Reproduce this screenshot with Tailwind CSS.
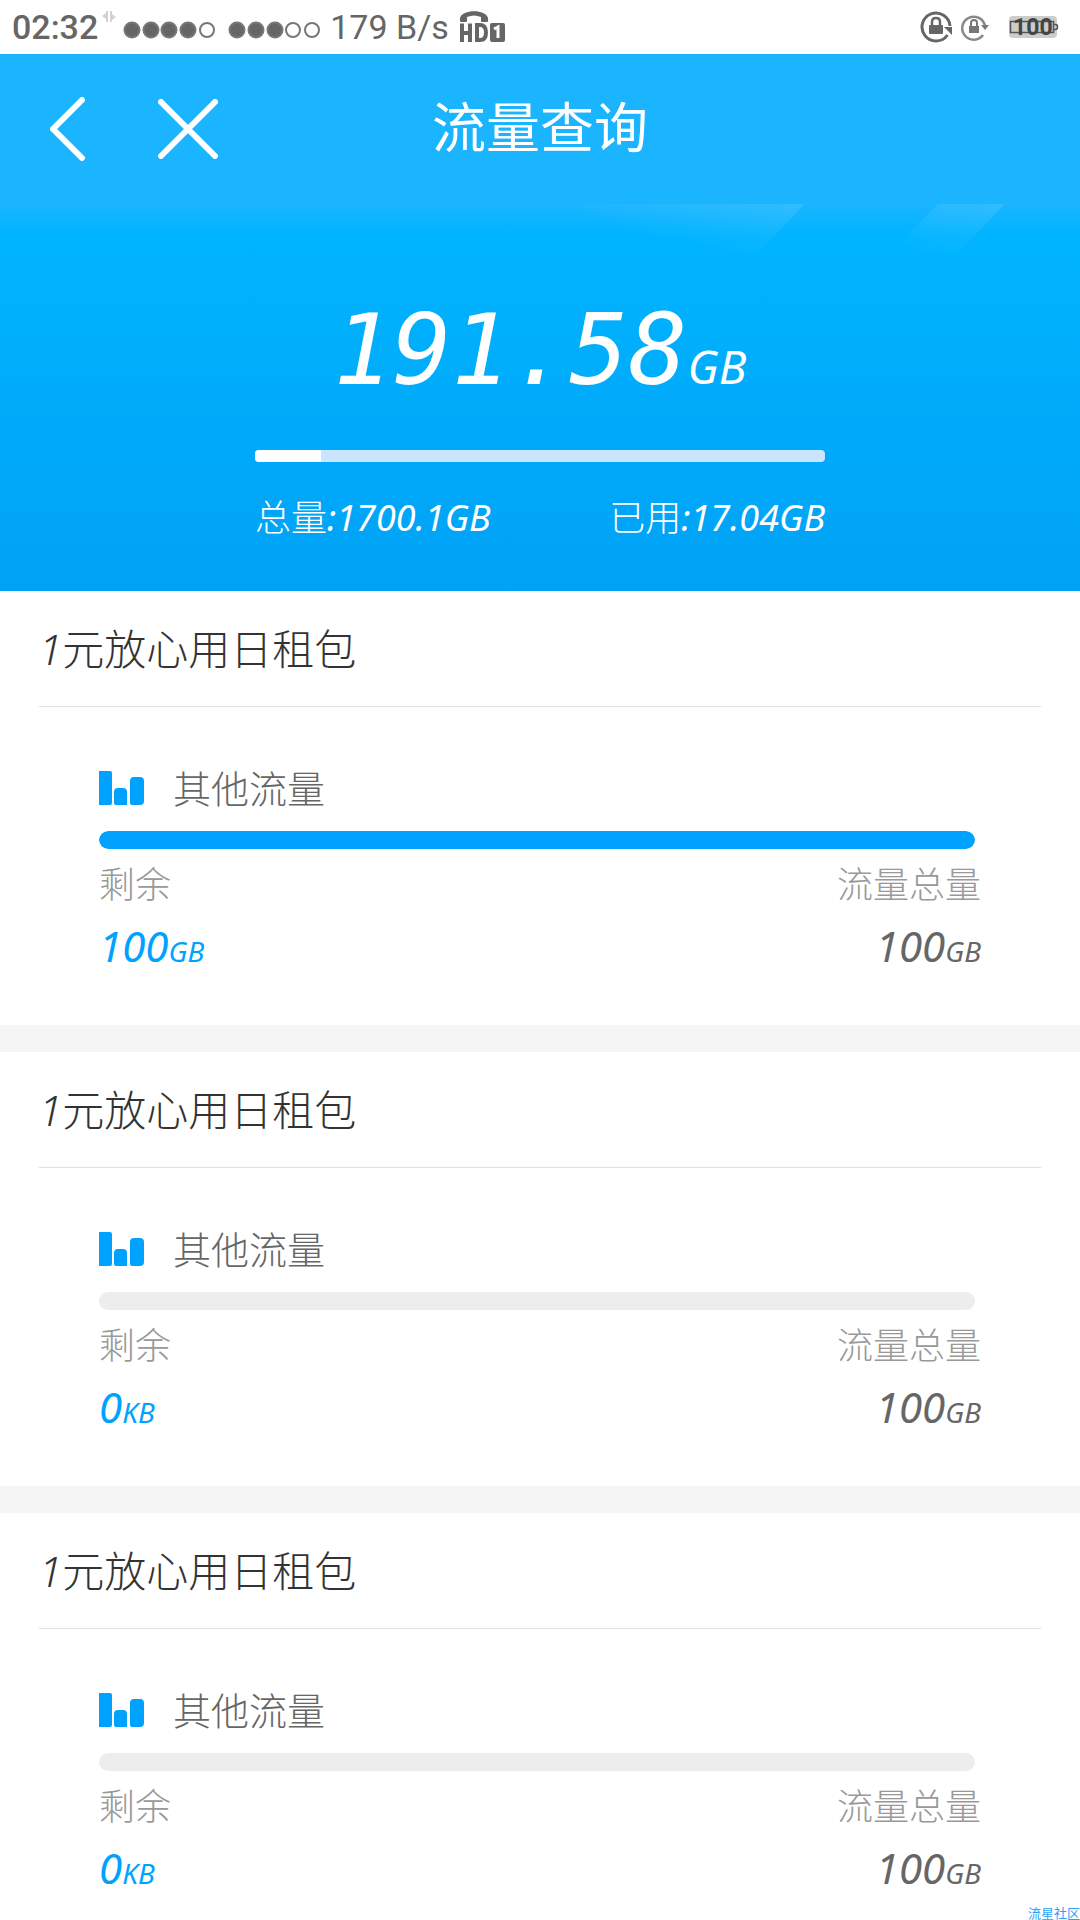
<!DOCTYPE html>
<html lang="zh-CN">
<head>
<meta charset="utf-8">
<meta name="viewport" content="width=device-width, initial-scale=1">
<title>流量查询</title>
<script src="https://cdn.jsdelivr.net/npm/@tailwindcss/browser@4"></script>
</head>
<body class="relative flex min-h-screen flex-col bg-white font-['Noto_Sans','Noto_Sans_CJK_SC',sans-serif] font-light text-[#666]">

<!-- Status bar -->
<div class="flex h-[54px] items-center justify-between pl-3 pr-[21px] font-['Roboto',sans-serif] text-[34px] leading-none text-[#666]">
  <div class="flex items-center">
    <span class="font-medium">02:32</span>
    <svg class="mb-5 ml-1 h-3 w-[14px]" viewBox="0 0 14 12" fill="#d2d2d2" aria-hidden="true"><path d="M6 0v11H4V8L0 5l4-3V0zM8 0h2v3l4 3-4 3v2H8z"/></svg>
    <svg class="ml-1.5 mt-1.5 h-5 w-[200px]" viewBox="0 0 200 20" fill="#666" stroke="#777" stroke-width="2" aria-hidden="true">
      <circle cx="10" cy="10" r="7.5"/><circle cx="29" cy="10" r="7.5"/><circle cx="47" cy="10" r="7.5"/><circle cx="66" cy="10" r="7.5"/><circle cx="85" cy="10" r="7" fill="none"/>
      <circle cx="115" cy="10" r="7.5"/><circle cx="134" cy="10" r="7.5"/><circle cx="153" cy="10" r="7.5"/><circle cx="171" cy="10" r="7" fill="none"/><circle cx="190" cy="10" r="7" fill="none"/>
    </svg>
    <span class="ml-2 font-normal">179 B/s</span>
    <svg class="ml-[10px] h-8 w-12" viewBox="0 0 48 32" aria-label="HD 1">
      <path d="M1 10V7C3-2 27-2 29 7v3q0 1-1 1h-5q-1 0-1-1V6Q15 3 8 6v4q0 1-1 1H2q-1 0-1-1z" fill="#666"/>
      <path d="M3 12.500V31M11 12.500V31M3 22H11M18 14v15h3q6 0 6-7.500T21 14z" fill="none" stroke="#666" stroke-width="4"/>
      <rect x="31" y="12" width="15" height="19" rx="2" fill="#666"/>
      <path d="M35 18l4-2v11" fill="none" stroke="#fff" stroke-width="3"/>
    </svg>
  </div>
  <div class="flex items-center">
    <svg class="h-8 w-8" viewBox="0 0 32 32" aria-hidden="true">
      <path d="M27.500 24A14 14 0 1 1 30 15" fill="none" stroke="#666" stroke-width="3"/>
      <path d="M24 16h8v8z" fill="#666"/><rect x="9" y="14" width="14" height="9" rx="1" fill="#666"/>
      <path d="M12 15v-4q0-4 4-4t4 4v4" fill="none" stroke="#666" stroke-width="2.500"/>
    </svg>
    <svg class="ml-[9px] h-7 w-7" viewBox="0 0 28 28" aria-hidden="true">
      <path d="M22 22A11.500 11.500 0 1 1 24 13" fill="none" stroke="#888" stroke-width="2.500"/>
      <path d="M20 12h8l-4 5z" fill="#777"/><rect x="8" y="13" width="10" height="7" fill="#777"/>
      <path d="M10 13v-3q0-3 3-3t3 3v3" fill="none" stroke="#777" stroke-width="2"/>
    </svg>
    <svg class="ml-5 h-9 w-[50px]" viewBox="0 -6 50 36" aria-label="100">
      <rect x="0" y="1" width="48" height="22" rx="4" fill="#ccc"/>
      <path d="M1.500 6.500h43v11h-43zM44.500 9.500h2q2 0 2 2.500t-2 2.500h-2" fill="none" stroke="#555" stroke-width="1.500"/>
      <text x="4" y="20" font-size="23" font-weight="700" fill="#444">100</text>
    </svg>
  </div>
</div>

<!-- Navigation and total usage -->
<div class="bg-[linear-gradient(#1ab4ff_0px,#1ab4ff_150px,#00b4ff_182px,#00a2f6_100%)] text-white">
  <header class="grid h-[150px] grid-cols-[1fr_auto_1fr] items-center px-[50px]">
    <div class="flex items-center gap-[72px]">
      <button type="button" aria-label="返回"><svg class="h-16 w-9" viewBox="0 0 36 64" fill="none" stroke="#fff" stroke-width="6" stroke-linecap="round" stroke-linejoin="round"><path d="M32 3L3 32l29 29"/></svg></button>
      <button type="button" aria-label="关闭"><svg class="h-[60px] w-[60px]" viewBox="0 0 60 60" fill="none" stroke="#fff" stroke-width="6" stroke-linecap="round"><path d="M3 3l54 54M57 3L3 57"/></svg></button>
    </div>
    <h1 class="pb-1 text-[54px] font-normal leading-[60px]">流量查询</h1>
  </header>
  <section class="relative h-[387px] px-[255px]">
    <svg class="absolute right-0 top-0 h-16 w-[540px]" viewBox="0 0 540 64" aria-hidden="true">
      <defs>
        <linearGradient id="beamWide" gradientUnits="userSpaceOnUse" x1="240" y1="0" x2="226" y2="60"><stop stop-color="#fff" stop-opacity=".1"/><stop offset="1" stop-color="#fff" stop-opacity="0"/></linearGradient>
        <linearGradient id="beamSmall" gradientUnits="userSpaceOnUse" x1="440" y1="0" x2="428" y2="60"><stop stop-color="#fff" stop-opacity=".1"/><stop offset="1" stop-color="#fff" stop-opacity="0"/></linearGradient>
      </defs>
      <path d="M30 0H265L203 64H190z" fill="url(#beamWide)"/>
      <path d="M398 0h67l-62 64h-67z" fill="url(#beamSmall)"/>
    </svg>
    <p class="flex items-baseline justify-center whitespace-nowrap pt-[86px] leading-[120px]"><span class="font-['DejaVu_Sans_Mono',monospace] text-[98px] font-normal italic">191.58</span><span class="text-[46px] font-normal italic">GB</span></p>
    <div class="mt-6 h-3 overflow-hidden rounded bg-[#cbe4ff]"><div class="h-full bg-white" style="width:11.600%"></div></div>
    <div class="flex justify-between whitespace-nowrap pt-[32px] text-[36px] leading-[48px]">
      <p>总量<span class="font-normal italic">:1700.1GB</span></p>
      <p>已用<span class="font-normal italic">:17.04GB</span></p>
    </div>
  </section>
</div>

<!-- Packages -->
<main class="flex flex-col gap-[27px] bg-[#f5f5f5]">
  <section class="bg-white pb-[45px]">
    <h2 class="mx-[39px] border-b border-[#e0e0e0] pb-[30px] pt-[31px] text-[42px] leading-[54px] text-[#333]"><span class="italic">1</span>元放心用日租包</h2>
    <div class="px-[99px] pt-[54px]">
      <div class="flex items-center gap-[29px]">
        <svg class="h-[34px] w-[45px]" viewBox="0 0 45 34" fill="#00a2ff" aria-hidden="true"><path d="M0 0h11q2 0 2 2v30q0 2-2 2H0zM15 21q0-4 4-4h5q4 0 4 4v13H17q-2 0-2-2zM31 10q0-4 4-4h6q4 0 4 4v20q0 4-4 4h-8q-2 0-2-2z"/></svg>
        <h3 class="text-[38px] leading-[54px]">其他流量</h3>
      </div>
      <div class="mr-1.5 mt-4 h-[18px] overflow-hidden rounded-full bg-[#ededed]"><div class="h-full rounded-full bg-[#00a2ff]" style="width:100%"></div></div>
      <dl class="mt-3 flex justify-between">
        <div><dt class="text-[36px] leading-[48px] text-[#999]">剩余</dt><dd class="pt-2 text-[42px] font-normal italic leading-[58px] text-[#00a2ff]">100<span class="text-[28px]">GB</span></dd></div>
        <div class="text-right"><dt class="text-[36px] leading-[48px] text-[#999]">流量总量</dt><dd class="pt-2 text-[42px] font-normal italic leading-[58px]">100<span class="text-[28px]">GB</span></dd></div>
      </dl>
    </div>
  </section>

  <section class="bg-white pb-[45px]">
    <h2 class="mx-[39px] border-b border-[#e0e0e0] pb-[30px] pt-[31px] text-[42px] leading-[54px] text-[#333]"><span class="italic">1</span>元放心用日租包</h2>
    <div class="px-[99px] pt-[54px]">
      <div class="flex items-center gap-[29px]">
        <svg class="h-[34px] w-[45px]" viewBox="0 0 45 34" fill="#00a2ff" aria-hidden="true"><path d="M0 0h11q2 0 2 2v30q0 2-2 2H0zM15 21q0-4 4-4h5q4 0 4 4v13H17q-2 0-2-2zM31 10q0-4 4-4h6q4 0 4 4v20q0 4-4 4h-8q-2 0-2-2z"/></svg>
        <h3 class="text-[38px] leading-[54px]">其他流量</h3>
      </div>
      <div class="mr-1.5 mt-4 h-[18px] overflow-hidden rounded-full bg-[#ededed]"></div>
      <dl class="mt-3 flex justify-between">
        <div><dt class="text-[36px] leading-[48px] text-[#999]">剩余</dt><dd class="pt-2 text-[42px] font-normal italic leading-[58px] text-[#00a2ff]">0<span class="text-[28px]">KB</span></dd></div>
        <div class="text-right"><dt class="text-[36px] leading-[48px] text-[#999]">流量总量</dt><dd class="pt-2 text-[42px] font-normal italic leading-[58px]">100<span class="text-[28px]">GB</span></dd></div>
      </dl>
    </div>
  </section>

  <section class="bg-white">
    <h2 class="mx-[39px] border-b border-[#e0e0e0] pb-[30px] pt-[31px] text-[42px] leading-[54px] text-[#333]"><span class="italic">1</span>元放心用日租包</h2>
    <div class="px-[99px] pt-[54px]">
      <div class="flex items-center gap-[29px]">
        <svg class="h-[34px] w-[45px]" viewBox="0 0 45 34" fill="#00a2ff" aria-hidden="true"><path d="M0 0h11q2 0 2 2v30q0 2-2 2H0zM15 21q0-4 4-4h5q4 0 4 4v13H17q-2 0-2-2zM31 10q0-4 4-4h6q4 0 4 4v20q0 4-4 4h-8q-2 0-2-2z"/></svg>
        <h3 class="text-[38px] leading-[54px]">其他流量</h3>
      </div>
      <div class="mr-1.5 mt-4 h-[18px] overflow-hidden rounded-full bg-[#ededed]"></div>
      <dl class="mt-3 flex justify-between">
        <div><dt class="text-[36px] leading-[48px] text-[#999]">剩余</dt><dd class="pt-2 text-[42px] font-normal italic leading-[58px] text-[#00a2ff]">0<span class="text-[28px]">KB</span></dd></div>
        <div class="text-right"><dt class="text-[36px] leading-[48px] text-[#999]">流量总量</dt><dd class="pt-2 text-[42px] font-normal italic leading-[58px]">100<span class="text-[28px]">GB</span></dd></div>
      </dl>
    </div>
  </section>
</main>

<p class="absolute bottom-0 right-0 text-[13px] font-normal leading-[13px] text-[#2ba0f5]">流星社区</p>
</body>
</html>
